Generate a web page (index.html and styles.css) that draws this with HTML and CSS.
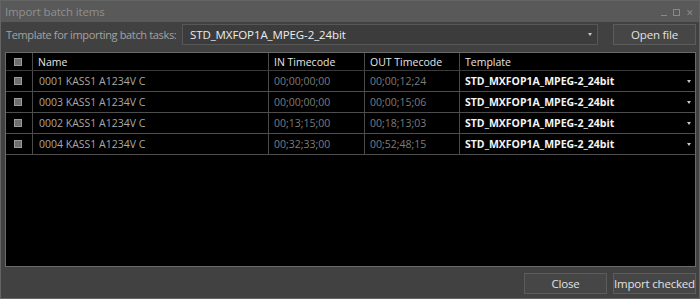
FILE: index.html
```html
<!DOCTYPE html>
<html lang="en">

<head>
  <meta charset="UTF-8">
  <meta name="viewport" content="width=device-width, initial-scale=1.0">
  <title>Import batch items</title>
  <link rel="stylesheet" href="styles.css">
</head>

<body>
  <div class="window">
    <div class="titlebar">
      <span class="title">Import batch items</span>
      <div class="controls">
        <span class="ctl-min"></span>
        <span class="ctl-max"></span>
        <span class="ctl-close">&#x2715;</span>
      </div>
    </div>

    <div class="content">
      <div class="toolbar">
        <label class="tpl-label">Template for importing batch tasks:</label>
        <div class="combo">
          <span>STD_MXFOP1A_MPEG-2_24bit</span>
          <span class="arrow"></span>
        </div>
        <button class="btn btn-open">Open file</button>
      </div>

      <div class="grid">
        <div class="row head">
          <div class="cell check"><span class="box"></span></div>
          <div class="cell">Name</div>
          <div class="cell">IN Timecode</div>
          <div class="cell">OUT Timecode</div>
          <div class="cell">Template</div>
        </div>
        <div class="row">
          <div class="cell check"><span class="box"></span></div>
          <div class="cell name">0001 KASS1 A1234V C</div>
          <div class="cell tc">00;00;00;00</div>
          <div class="cell tc">00;00;12;24</div>
          <div class="cell tpl">STD_MXFOP1A_MPEG-2_24bit<span class="arrow"></span></div>
        </div>
        <div class="row">
          <div class="cell check"><span class="box"></span></div>
          <div class="cell name">0003 KASS1 A1234V C</div>
          <div class="cell tc">00;00;00;00</div>
          <div class="cell tc">00;00;15;06</div>
          <div class="cell tpl">STD_MXFOP1A_MPEG-2_24bit<span class="arrow"></span></div>
        </div>
        <div class="row">
          <div class="cell check"><span class="box"></span></div>
          <div class="cell name">0002 KASS1 A1234V C</div>
          <div class="cell tc">00;13;15;00</div>
          <div class="cell tc">00;18;13;03</div>
          <div class="cell tpl">STD_MXFOP1A_MPEG-2_24bit<span class="arrow"></span></div>
        </div>
        <div class="row">
          <div class="cell check"><span class="box"></span></div>
          <div class="cell name">0004 KASS1 A1234V C</div>
          <div class="cell tc">00;32;33;00</div>
          <div class="cell tc">00;52;48;15</div>
          <div class="cell tpl">STD_MXFOP1A_MPEG-2_24bit<span class="arrow"></span></div>
        </div>
      </div>

      <div class="footer">
        <button class="btn">Close</button>
        <button class="btn">Import checked</button>
      </div>
    </div>
  </div>
</body>

</html>
```

FILE: styles.css
```css
body {
  margin: 0;
  font-family: "Open Sans", "Noto Sans", sans-serif;
  background: #404040;
}

.window {
  width: 700px;
  height: 299px;
  box-sizing: border-box;
  border: 1px solid #646464;
  background: #414141;
  display: flex;
  flex-direction: column;
}

.titlebar {
  height: 21px;
  background: #595959;
  display: flex;
  align-items: center;
  justify-content: space-between;
  padding: 0 5px 0 4px;
  color: #8f8f8f;
  font-size: 11.5px;
  letter-spacing: -0.15px;
}

.controls {
  display: flex;
  align-items: center;
  gap: 6px;
  margin-top: 2px;
}

.ctl-min {
  width: 6px;
  height: 5px;
  border-bottom: 1px solid #8a8a8a;
}

.ctl-max {
  width: 5px;
  height: 5px;
  border: 1px solid #8a8a8a;
}

.ctl-close {
  font-size: 9px;
  color: #8a8a8a;
  line-height: 9px;
}

.content {
  flex: 1;
  display: flex;
  flex-direction: column;
  padding: 2px 3px 4px 4px;
}

.toolbar {
  display: flex;
  align-items: center;
  height: 21px;
}

.tpl-label {
  color: #a3a3a3;
  font-size: 11px;
  letter-spacing: -0.35px;
  white-space: nowrap;
  margin-left: 1px;
  width: 176px;
  flex-shrink: 0;
}

.combo {
  width: 402px;
  height: 19px;
  border: 1px solid #575757;
  background: #3c3c3c;
  color: #ececec;
  font-size: 11.5px;
  letter-spacing: -0.1px;
  display: flex;
  align-items: center;
  justify-content: space-between;
  padding: 0 5px 0 7px;
  box-sizing: content-box;
}

.combo .arrow,
.tpl .arrow {
  width: 0;
  height: 0;
  border-left: 2px solid transparent;
  border-right: 2px solid transparent;
  border-top: 3px solid #c8c8c8;
}

.btn {
  width: 83px;
  height: 21px;
  background: #464646;
  border: 1px solid #5c5c5c;
  color: #e2e2e2;
  font-family: inherit;
  font-size: 11.5px;
  letter-spacing: -0.2px;
  white-space: nowrap;
  padding: 0;
}

.btn-open {
  margin-left: auto;
}

.grid {
  flex: 1;
  margin-top: 7px;
  background: #000;
  border: 1px solid #6a6a6a;
  font-size: 10.5px;
}

.row {
  display: grid;
  grid-template-columns: 26px 236px 96px 95px 1fr;
  height: 20px;
  border-bottom: 1px solid #4e4e4e;
}

.row.head {
  height: 17px;
  color: #e6e6e6;
  border-bottom-color: #3a3a3a;
}

.cell {
  display: flex;
  align-items: center;
  padding-left: 5px;
  border-left: 1px solid #4a4a4a;
  white-space: nowrap;
}

.cell.check {
  border-left: none;
  padding-left: 8px;
}

.box {
  width: 6px;
  height: 6px;
  background: #6f6f6f;
  border: 1px solid #9b9b9b;
}

.name {
  color: #a9a9a9;
  padding-left: 6px;
}

.tc {
  color: #7c7c7c;
}

.tpl {
  color: #f4f4f4;
  font-weight: bold;
  justify-content: space-between;
  padding-right: 4px;
}

.footer {
  display: flex;
  justify-content: flex-end;
  gap: 6px;
  margin-top: 6px;
}
```
